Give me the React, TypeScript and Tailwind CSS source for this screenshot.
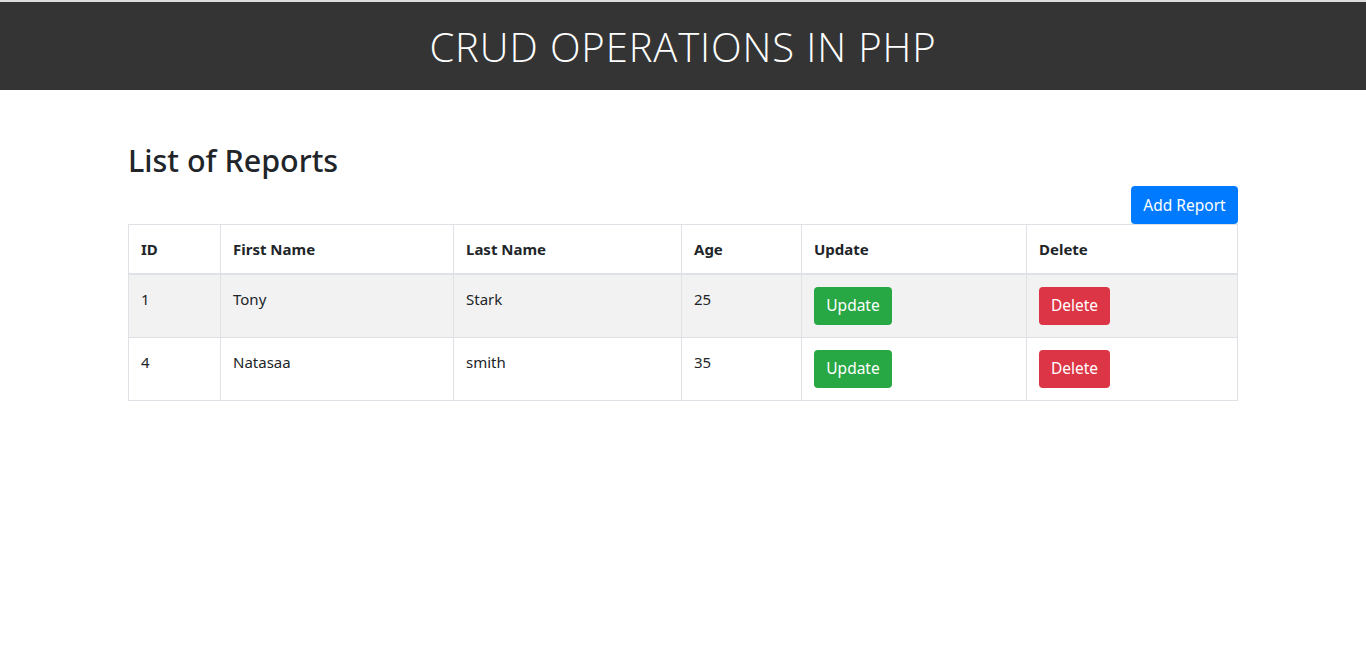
import React from "react";

const rows = [
  { id: "1", first: "Tony", last: "Stark", age: "25" },
  { id: "4", first: "Natasaa", last: "smith", age: "35" },
];

export default function App() {
  return (
    <div className="min-h-[657px] bg-white text-[#212529]" style={{ fontFamily: '"Noto Sans", "Open Sans", sans-serif' }}>
      <header className="border-t-2 border-[#dcdcdc] bg-[#343434] h-[90px] flex items-center justify-center">
        <h1
          className="text-white text-[40px] font-light tracking-[0.9px] leading-none pt-[2px]"
          style={{ fontFamily: '"Open Sans", "Noto Sans", sans-serif' }}
        >
          CRUD OPERATIONS IN PHP
        </h1>
      </header>
      <main className="mx-auto w-[1110px] pt-[51px]">
        <h2 className="text-[30.5px] font-medium leading-[38px] mb-[7px]">List of Reports</h2>
        <div className="flex justify-end">
          <button className="bg-[#007bff] text-white text-[15.5px] whitespace-nowrap rounded-[4px] w-[107px] h-[38px] flex items-center justify-center pt-[1px]">
            Add Report
          </button>
        </div>
        <table className="w-[1109px] table-fixed border-collapse text-[15px]">
          <colgroup>
            <col className="w-[92px]" />
            <col className="w-[233px]" />
            <col className="w-[228px]" />
            <col className="w-[120px]" />
            <col className="w-[225px]" />
            <col className="w-[211px]" />
          </colgroup>
          <thead>
            <tr>
              {["ID", "First Name", "Last Name", "Age", "Update", "Delete"].map((h) => (
                <th
                  key={h}
                  className="border border-[#dee2e6] border-b-2 text-left font-bold px-[12px] h-[49px] align-middle"
                >
                  {h}
                </th>
              ))}
            </tr>
          </thead>
          <tbody>
            {rows.map((r, i) => (
              <tr key={r.id} className={i % 2 === 0 ? "bg-[#f2f2f2]" : "bg-white"}>
                {[r.id, r.first, r.last, r.age].map((v, j) => (
                  <td key={j} className="border border-[#dee2e6] px-[12px] pt-[13px] pb-[12px] align-top h-[63px]">
                    {v}
                  </td>
                ))}
                <td className="border border-[#dee2e6] px-[12px] py-[12px] align-top">
                  <button className="bg-[#28a745] text-white text-[15.5px] w-[78px] h-[38px] rounded-[4px] flex items-center justify-center pt-[1px]">
                    Update
                  </button>
                </td>
                <td className="border border-[#dee2e6] px-[12px] py-[12px] align-top">
                  <button className="bg-[#dc3545] text-white text-[15.5px] w-[71px] h-[38px] rounded-[4px] flex items-center justify-center pt-[1px]">
                    Delete
                  </button>
                </td>
              </tr>
            ))}
          </tbody>
        </table>
      </main>
    </div>
  );
}
